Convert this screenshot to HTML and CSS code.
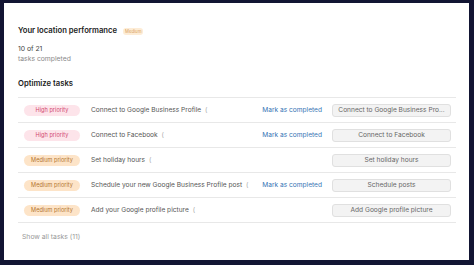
FILE: index.html
```html
<!DOCTYPE html>
<html>
<head>
<meta charset="utf-8">
<link rel="stylesheet" href="styles.css">
</head>
<body>
<div class="card">
  <div class="head">
    <h1 class="title">Your location performance</h1>
    <span class="badge">Medium</span>
  </div>
  <div class="stats">
    <div class="count">10 of 21</div>
    <div class="sub">tasks completed</div>
  </div>
  <h2 class="section">Optimize tasks</h2>
  <ul class="list">
    <li class="row">
      <span class="pill high">High priority</span>
      <span class="task">Connect to Google Business Profile <span class="paren">(</span></span>
      <a class="mark">Mark as completed</a>
      <button class="btn">Connect to Google Business Pro...</button>
    </li>
    <li class="row">
      <span class="pill high">High priority</span>
      <span class="task">Connect to Facebook <span class="paren">(</span></span>
      <a class="mark">Mark as completed</a>
      <button class="btn">Connect to Facebook</button>
    </li>
    <li class="row">
      <span class="pill med">Medium priority</span>
      <span class="task">Set holiday hours <span class="paren">(</span></span>
      <button class="btn">Set holiday hours</button>
    </li>
    <li class="row">
      <span class="pill med">Medium priority</span>
      <span class="task">Schedule your new Google Business Profile post <span class="paren">(</span></span>
      <a class="mark">Mark as completed</a>
      <button class="btn">Schedule posts</button>
    </li>
    <li class="row">
      <span class="pill med">Medium priority</span>
      <span class="task">Add your Google profile picture <span class="paren">(</span></span>
      <button class="btn">Add Google profile picture</button>
    </li>
  </ul>
  <div class="more">Show all tasks (11)</div>
</div>
</body>
</html>
```
FILE: styles.css
```css
html, body {
  margin: 0;
  padding: 0;
}
body {
  background: #121533;
  padding: 3px 5px 5px 4px;
  font-family: Inter, "Noto Sans", sans-serif;
  color: #333;
}
.card {
  background: #fff;
  height: 257px;
  box-sizing: border-box;
  padding: 22px 13px 0 14px;
}
.head {
  display: flex;
  align-items: center;
  height: 12px;
}
.title {
  margin: 0;
  font-size: 7.7px;
  font-weight: 600;
  color: #222;
  line-height: 12px;
}
.badge {
  margin-left: 6px;
  background: #fdecd6;
  color: #d9a35c;
  font-size: 4.3px;
  line-height: 7px;
  padding: 0 2px;
  border-radius: 3px;
}
.stats {
  margin-top: 7px;
  font-size: 6.8px;
  line-height: 10px;
}
.count {
  color: #444;
}
.sub {
  color: #8a8a8a;
}
.section {
  margin: 14px 0 0;
  font-size: 7.7px;
  font-weight: 600;
  line-height: 12px;
  color: #222;
}
.list {
  list-style: none;
  margin: 7px 0 0;
  padding: 0;
  border-top: 1px solid #e8e8e8;
}
.row {
  display: flex;
  align-items: center;
  height: 24px;
  border-bottom: 1px solid #e8e8e8;
  padding: 0 5px 0 6px;
  font-size: 6.6px;
}
.pill {
  width: 56px;
  height: 11px;
  line-height: 11px;
  border-radius: 6px;
  text-align: center;
  font-size: 5.6px;
  flex: none;
}
.high {
  background: #fde4ea;
  color: #d2466f;
}
.med {
  background: #fde4c8;
  color: #b3742e;
}
.task {
  flex: 1;
  margin-left: 11px;
  color: #555;
  white-space: nowrap;
}
.paren {
  color: #aaa;
  margin-left: 2px;
}
.mark {
  color: #3574b4;
  margin-right: 10px;
}
.btn {
  width: 119px;
  height: 13px;
  flex: none;
  padding: 0;
  border: 1px solid #e0e0e0;
  border-radius: 3px;
  background: #f3f3f3;
  font-family: inherit;
  font-size: 6.6px;
  color: #666;
}
.more {
  margin-top: 9px;
  margin-left: 4px;
  font-size: 6.8px;
  line-height: 10px;
  color: #999;
}
```
